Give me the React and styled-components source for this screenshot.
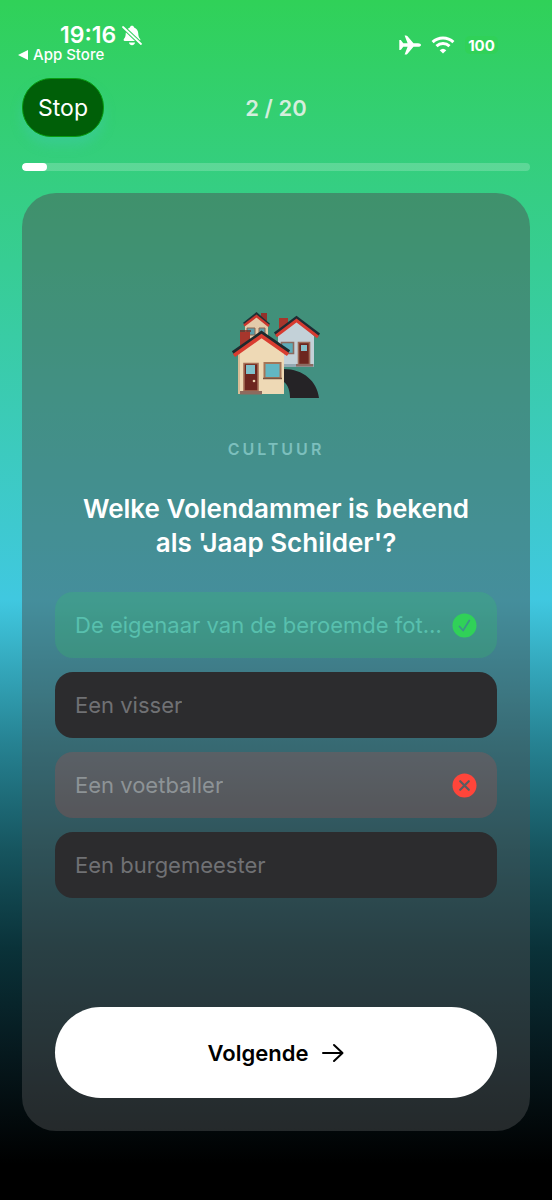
import React from 'react';
import styled, { createGlobalStyle } from 'styled-components';

const GlobalStyle = createGlobalStyle`
  * {
    box-sizing: border-box;
  }

  body {
    margin: 0;
    background: #000;
    font-family: Inter, 'Liberation Sans', sans-serif;
  }

  button {
    border: 0;
    font-family: inherit;
  }
`;

const Screen = styled.div`
  display: flex;
  flex-direction: column;
  min-height: 100vh;
  padding: 24px 22px 69px;
  color: #fff;
  background: linear-gradient(
    #30d158 0%,
    #40c8e0 50%,
    #268292 62%,
    #16545e 71%,
    #0a3239 79%,
    #06181d 88%,
    #000 97%
  );
`;

const StatusBar = styled.div`
  display: flex;
  justify-content: space-between;
  height: 54px;
`;

const Clock = styled.div`
  display: flex;
  align-items: center;
  gap: 6px;
  height: 22px;
  padding-left: 38px;
  font-size: 23px;
  font-weight: 600;
  line-height: 22px;
`;

const BackLink = styled.a`
  display: flex;
  align-items: center;
  gap: 5px;
  height: 18px;
  margin-left: -4px;
  color: #fff;
  font-size: 15px;
  font-weight: 500;
  line-height: 18px;
  text-decoration: none;
`;

const Indicators = styled.div`
  display: flex;
  align-items: center;
  gap: 10px;
  height: 42px;
  padding-right: 32px;
`;

const Battery = styled.span`
  display: flex;
  align-items: center;
  justify-content: center;
  width: 33px;
  height: 18px;
  border-radius: 5px;
  font-size: 15px;
  font-weight: 700;
  background: #30d158;
`;

const Header = styled.header`
  display: grid;
  grid-template-columns: 1fr auto 1fr;
  align-items: center;
`;

const StopButton = styled.button`
  justify-self: start;
  width: 82px;
  height: 59px;
  border: 1px solid #089c10;
  border-radius: 29px;
  padding: 0;
  color: #fff;
  font-size: 23px;
  background: #005f08;
  box-shadow: 0 8px 12px rgba(64, 200, 180, 0.4);
`;

const Counter = styled.span`
  color: #d4eedd;
  font-size: 22px;
  font-weight: 600;
`;

const Progress = styled.div`
  height: 8px;
  margin: 26px 0 22px;
  border-radius: 4px;
  overflow: hidden;
  background: rgba(255, 255, 255, 0.2);
`;

const ProgressFill = styled.div`
  height: 100%;
  border-radius: 4px;
  background: #fff;
`;

const Card = styled.main`
  display: flex;
  flex: 1;
  flex-direction: column;
  padding: 119px 33px 33px;
  border-radius: 34px;
  background: rgba(76, 80, 82, 0.48);
`;

const Category = styled.p`
  margin: 39px 0 33px;
  color: #7cbfbd;
  font-size: 16px;
  font-weight: 600;
  letter-spacing: 3px;
  line-height: 20px;
  text-align: center;
`;

const Question = styled.h1`
  max-width: 410px;
  margin: 0 auto 32px;
  font-size: 26px;
  font-weight: 600;
  line-height: 34px;
  text-align: center;
`;

const Options = styled.div`
  display: flex;
  flex-direction: column;
  gap: 14px;
  margin-bottom: 40px;
`;

const optionColors = {
  idle: { background: '#2c2c2e', text: '#707174' },
  correct: { background: 'rgba(48, 209, 88, 0.2)', text: '#58c0ae' },
  wrong: { background: 'rgba(180, 80, 76, 0.28)', text: '#8d9396' },
};

const Option = styled.button`
  display: flex;
  align-items: center;
  justify-content: space-between;
  gap: 6px;
  height: 66px;
  padding: 0 20px;
  border-radius: 18px;
  color: ${({ $state }) => optionColors[$state].text};
  font-size: 22px;
  text-align: left;
  background: ${({ $state }) => optionColors[$state].background};
`;

const OptionText = styled.span`
  overflow: hidden;
  text-overflow: ellipsis;
  white-space: nowrap;
`;

const OptionIcon = styled.svg`
  flex: none;
  width: 25px;
  height: 25px;
`;

const NextButton = styled.button`
  display: flex;
  align-items: center;
  justify-content: center;
  gap: 14px;
  height: 91px;
  margin-top: auto;
  border-radius: 46px;
  color: #000;
  font-size: 22px;
  font-weight: 600;
  background: #fff;
`;

const HousesSvg = styled.svg`
  display: block;
  flex: none;
  align-self: center;
`;

const BellOff = () => (
  <svg width="20" height="21" viewBox="0 0 20 21" fill="#fff">
    <path d="M10 .8c1 0 1.900.6 2.100 1.600 2.600.9 3.900 3 4.100 5.600.2 3 .6 4.300 1.800 5.800.7.9.5 2.200-.8 2.200H2.800c-1.300 0-1.500-1.300-.8-2.200C3.300 12.300 3.600 11 3.800 8 4 5.400 5.300 3.300 7.900 2.400 8.100 1.400 9 .8 10 .8z" />
    <path d="M7 17.500h6c-.3 1.700-1.500 2.700-3 2.700s-2.700-1-3-2.700z" />
    <path d="M1 2l18 17" stroke="#31d15f" strokeWidth="3.800" />
    <path d="M1 2l18 17" stroke="#fff" strokeWidth="1.800" strokeLinecap="round" />
  </svg>
);

const Airplane = () => (
  <svg width="22" height="20" viewBox="0 0 22 20" fill="#fff">
    <path d="M22 10c0 1-1.300 1.800-3 1.800h-4.500L8.300 19c-.4.400-.8.600-1.400.6H5.600l3-7.800H4.300l-2.100 2.700c-.2.300-.5.400-.9.400H.3V5.100h1c.4 0 .7.100.9.400l2.100 2.700h4.300l-3-7.800h1.300c.6 0 1 .2 1.400.6l6.200 7.200H19c1.700 0 3 .8 3 1.800z" />
  </svg>
);

const Wifi = () => (
  <svg width="24" height="18" viewBox="0 0 24 18" fill="none" stroke="#fff" strokeWidth="3">
    <path d="M1.600 6.200a15 15 0 0 1 20.800 0" />
    <path d="M5.500 10.200a9.400 9.400 0 0 1 13 0" />
    <path d="M12 17.500l-3.300-3.300a4.800 4.800 0 0 1 6.600 0z" fill="#fff" stroke="none" />
  </svg>
);

const CheckIcon = () => (
  <OptionIcon viewBox="0 0 25 25" fill="none">
    <circle cx="12.500" cy="12.500" r="12" fill="#30d158" />
    <path d="M7.500 13.500l3.600 4 6.200-10" stroke="#3a9687" strokeWidth="1.800" strokeLinecap="round" strokeLinejoin="round" />
  </OptionIcon>
);

const CrossIcon = () => (
  <OptionIcon viewBox="0 0 25 25" fill="none">
    <circle cx="12.500" cy="12.500" r="12" fill="#ff453a" />
    <path d="M8.200 8.200l8.600 8.600M16.800 8.200l-8.600 8.600" stroke="#5c5c60" strokeWidth="2.200" strokeLinecap="round" />
  </OptionIcon>
);

const Arrow = () => (
  <svg width="22" height="20" viewBox="0 0 22 20" fill="none" stroke="#000" strokeWidth="2" strokeLinecap="round" strokeLinejoin="round">
    <path d="M1 10h19M12 2l8.500 8-8.500 8" />
  </svg>
);

const Houses = () => (
  <HousesSvg width="90" height="88" viewBox="15 12 90 88">
    {/* road */}
    <path d="M68 69c19 0 33 12 35 29H74c0-7-2-13-6-16z" fill="#252326" />
    {/* back house */}
    <path d="M45 13h6v11h-6z" fill="#93302a" />
    <path d="M29 24l12-10 11 11v14H29z" fill="#e3cbaa" />
    <path d="M31 28h8v7h-8zM43 28h6v8h-6z" fill="#5b9fab" stroke="#8f654e" />
    <path d="M28 24l12.500-10L53 25" fill="none" stroke="#1f3035" strokeWidth="3" />
    <path d="M28 25.500L40.500 16 53 26" fill="none" stroke="#cb382d" strokeWidth="2.400" />
    {/* right house */}
    <path d="M63 18h9v14l-9 2z" fill="#a7362c" />
    <path d="M62 35l19-15 17 16v31H62z" fill="#c3d1d8" />
    <path d="M62 64h36v3H62z" fill="#94a9b3" />
    <path d="M65.500 42.500h12v11h-12z" fill="#5bacb9" stroke="#8c6a5e" strokeWidth="1.600" />
    <path d="M82.500 42.500h11v22h-11z" fill="#6d261f" stroke="#9c6a57" strokeWidth="1.600" />
    <path d="M85 45h6v6h-6z" fill="#86bfc9" />
    <path d="M80 64h17v2.500H80z" fill="#8b6b62" />
    <path d="M59 34l21.500-16L103 35" fill="none" stroke="#1e2c33" strokeWidth="3.500" />
    <path d="M60 36l20.500-15.500L102 37" fill="none" stroke="#d73b30" strokeWidth="3" />
    {/* front house */}
    <path d="M24 32h10v11l-10 6z" fill="#a7362c" />
    <path d="M24 31h11" stroke="#72261f" strokeWidth="1.500" />
    <path d="M22 50l23-16 23 17v43H22z" fill="#eed9b5" />
    <path d="M22 51l2-1v44h-2z" fill="#d9bd96" />
    <path d="M28 63.500h14V91H28z" fill="#6d261f" stroke="#a66e56" strokeWidth="1.600" />
    <path d="M30 65h9v9h-9z" fill="#80c1cb" />
    <circle cx="38" cy="81" r="1.300" fill="#ecd1ad" />
    <path d="M48.500 63h16v15h-16z" fill="#62b6c3" stroke="#a47558" strokeWidth="2" />
    <path d="M47 78.500h19" stroke="#785241" strokeWidth="1.500" />
    <path d="M24 91h22v3.500H24z" fill="#8d6a5e" />
    <path d="M17 53l28.500-20L73 52" fill="none" stroke="#1e2a2d" strokeWidth="4" />
    <path d="M18 55.500l27.500-19.500L72 54.500" fill="none" stroke="#d93d30" strokeWidth="3.800" />
  </HousesSvg>
);

const options = [
  { text: 'De eigenaar van de beroemde fot…', state: 'correct' },
  { text: 'Een visser', state: 'idle' },
  { text: 'Een voetballer', state: 'wrong' },
  { text: 'Een burgemeester', state: 'idle' },
];

const App = () => (
  <>
    <GlobalStyle />
    <Screen>
      <StatusBar>
        <div>
          <Clock>
            19:16
            <BellOff />
          </Clock>
          <BackLink href="#">
            <svg width="10" height="10" viewBox="0 0 10 10" fill="#fff">
              <path d="M0 5l10-5v10z" />
            </svg>
            App Store
          </BackLink>
        </div>
        <Indicators>
          <Airplane />
          <Wifi />
          <Battery>100</Battery>
        </Indicators>
      </StatusBar>
      <Header>
        <StopButton type="button">Stop</StopButton>
        <Counter>2 / 20</Counter>
      </Header>
      <Progress>
        <ProgressFill style={{ width: `${(1 / 20) * 100}%` }} />
      </Progress>
      <Card>
        <Houses />
        <Category>CULTUUR</Category>
        <Question>Welke Volendammer is bekend als 'Jaap Schilder'?</Question>
        <Options>
          {options.map(({ text, state }) => (
            <Option key={text} type="button" $state={state} disabled>
              <OptionText>{text}</OptionText>
              {state === 'correct' && <CheckIcon />}
              {state === 'wrong' && <CrossIcon />}
            </Option>
          ))}
        </Options>
        <NextButton type="button">
          Volgende
          <Arrow />
        </NextButton>
      </Card>
    </Screen>
  </>
);

export default App;
